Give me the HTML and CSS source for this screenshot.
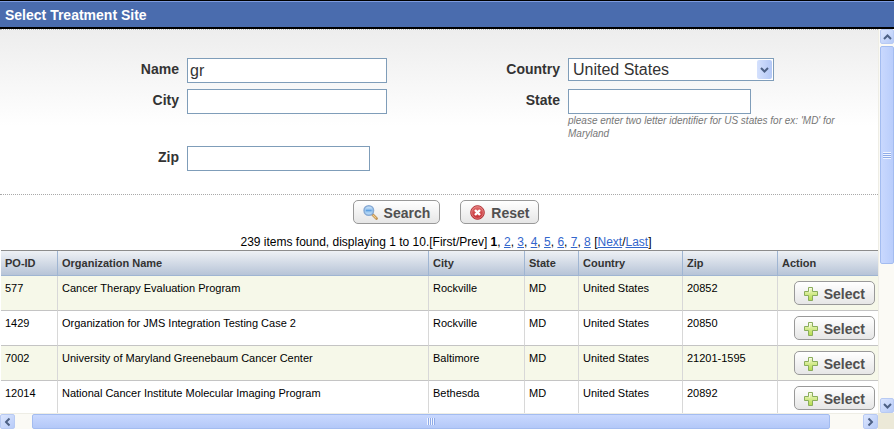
FILE: index.html
```html
<!DOCTYPE html>
<html lang="en">
<head>
<meta charset="utf-8">
<title>Select Treatment Site</title>
<link rel="stylesheet" href="styles.css">
</head>
<body>
<svg class="defs" aria-hidden="true">
  <defs>
    <linearGradient id="green" x1="0" y1="0" x2="0" y2="1"><stop offset="0" stop-color="#f4fad6"/><stop offset=".45" stop-color="#d6ec92"/><stop offset="1" stop-color="#b4dc4c"/></linearGradient>
    <linearGradient id="red" x1="0" y1="0" x2="0" y2="1"><stop offset="0" stop-color="#e07070"/><stop offset="1" stop-color="#c22a30"/></linearGradient>
    <linearGradient id="lens" x1="0" y1="0" x2="0" y2="1"><stop offset="0" stop-color="#d8ebfb"/><stop offset=".5" stop-color="#8fc0ee"/><stop offset="1" stop-color="#c4e2fa"/></linearGradient>
    <symbol id="plus" viewBox="0 0 14 14"><path d="M4.500 .5h4v4h5v4h-5v5h-4v-5h-4v-4h4z" fill="url(#green)" stroke="#8aad5c"/><path d="M5.500 5.500v-4h2" fill="none" stroke="#fff" stroke-opacity=".6"/></symbol>
    <symbol id="find" viewBox="0 0 15 15"><path d="M9.500 9.500l4 4" stroke="#b98a4a" stroke-width="2.600" stroke-linecap="round"/><path d="M9.800 9.800l3.500 3.500" stroke="#f2cf8c" stroke-width="1.200"/><circle cx="5.800" cy="5.500" r="4.800" fill="url(#lens)" stroke="#86a9d4" stroke-width="1.400"/><path d="M3 5.500h5.500" stroke="#5e9fe0" stroke-width="1.500"/></symbol>
    <symbol id="cancel" viewBox="0 0 15 15"><circle cx="7.500" cy="7.500" r="6.800" fill="url(#red)" stroke="#b02d32"/><circle cx="7.500" cy="7.500" r="5.800" fill="none" stroke="#eda0a0" stroke-width=".6"/><path d="M5 5l5 5M10 5l-5 5" stroke="#fff" stroke-width="2.400"/></symbol>
    <symbol id="chevron" viewBox="0 0 9 6"><path d="M1 1l3.500 3.500L8 1" fill="none" stroke="#4d6185" stroke-width="2"/></symbol>
  </defs>
</svg>
<header class="titlebar"><h1>Select Treatment Site</h1></header>
<div class="viewport">
  <main class="pane">
    <form class="search">
      <div class="fields">
        <label for="name">Name</label>
        <div><input id="name" type="text" value="gr"></div>
        <label for="country">Country</label>
        <div class="select">
          <select id="country"><option>United States</option></select>
          <span class="drop"><svg><use href="#chevron"/></svg></span>
        </div>
        <label for="city">City</label>
        <div><input id="city" type="text"></div>
        <label for="state">State</label>
        <div>
          <input id="state" class="short" type="text">
          <p class="note">please enter two letter identifier for US states for ex: 'MD' for Maryland</p>
        </div>
        <label for="zip">Zip</label>
        <div><input id="zip" class="short" type="text"></div>
      </div>
      <div class="actions">
        <button type="button" class="btn"><svg><use href="#find"/></svg>Search</button>
        <button type="reset" class="btn"><svg><use href="#cancel"/></svg>Reset</button>
      </div>
    </form>
    <p class="paging">239 items found, displaying 1 to 10.[First/Prev] <b>1</b>, <a href="#2">2</a>, <a href="#3">3</a>, <a href="#4">4</a>, <a href="#5">5</a>, <a href="#6">6</a>, <a href="#7">7</a>, <a href="#8">8</a> [<a href="#next">Next</a>/<a href="#last">Last</a>]</p>
    <table class="results">
      <colgroup><col class="c-id"><col><col class="c-city"><col class="c-state"><col class="c-country"><col class="c-zip"><col class="c-action"></colgroup>
      <thead><tr><th>PO-ID</th><th>Organization Name</th><th>City</th><th>State</th><th>Country</th><th>Zip</th><th>Action</th></tr></thead>
      <tbody>
        <tr><td>577</td><td>Cancer Therapy Evaluation Program</td><td>Rockville</td><td>MD</td><td>United States</td><td>20852</td><td class="act"><button type="button" class="btn"><svg><use href="#plus"/></svg>Select</button></td></tr>
        <tr><td>1429</td><td>Organization for JMS Integration Testing Case 2</td><td>Rockville</td><td>MD</td><td>United States</td><td>20850</td><td class="act"><button type="button" class="btn"><svg><use href="#plus"/></svg>Select</button></td></tr>
        <tr><td>7002</td><td>University of Maryland Greenebaum Cancer Center</td><td>Baltimore</td><td>MD</td><td>United States</td><td>21201-1595</td><td class="act"><button type="button" class="btn"><svg><use href="#plus"/></svg>Select</button></td></tr>
        <tr><td>12014</td><td>National Cancer Institute Molecular Imaging Program</td><td>Bethesda</td><td>MD</td><td>United States</td><td>20892</td><td class="act"><button type="button" class="btn"><svg><use href="#plus"/></svg>Select</button></td></tr>
      </tbody>
    </table>
  </main>
  <div class="bar vertical">
    <span class="arrow up"><svg><use href="#chevron"/></svg></span>
    <span class="track"><span class="thumb"><i class="grip"></i></span></span>
    <span class="arrow"><svg><use href="#chevron"/></svg></span>
  </div>
  <div class="bar horizontal">
    <span class="arrow left"><svg><use href="#chevron"/></svg></span>
    <span class="track"><span class="thumb"><i class="grip"></i></span></span>
    <span class="arrow right"><svg><use href="#chevron"/></svg></span>
  </div>
  <div class="corner"></div>
</div>
</body>
</html>
```
FILE: styles.css
```css
* { box-sizing: border-box; }

body {
  margin: 0;
  height: 100vh;
  padding-bottom: 3px;
  display: flex;
  flex-direction: column;
  overflow: hidden;
  background: #fff;
  color: #000;
  font-family: "Liberation Sans", Arial, sans-serif;
  font-size: 11px;
}

.defs { position: absolute; width: 0; height: 0; }

.titlebar {
  flex: none;
  padding: 2px 5px 0;
  border-top: 1px solid #000;
  border-bottom: 2px solid #000;
  background: #4a6cae;
  box-shadow: inset 0 1px #7d9be0;
}

h1 {
  margin: 0;
  color: #fff;
  font-size: 14px;
  line-height: 24px;
}

.viewport {
  flex: 1;
  min-height: 0;
  display: grid;
  grid-template: minmax(0, 1fr) 16px / minmax(0, 1fr) 16px;
}

.pane {
  overflow: hidden;
  border-top: 1px dotted #b5b5b5;
  background: linear-gradient(#ededed, #fff 96px);
}

.fields {
  display: grid;
  grid-template-columns: 179fr 200fr 165fr 310fr;
  gap: 6px 8px;
  padding: 28px 0 23px;
  border-bottom: 1px dotted #a9a9a9;
}

.fields label {
  color: #333;
  font-size: 14px;
  font-weight: bold;
  line-height: 22px;
  text-align: right;
}

input, select {
  display: block;
  width: 200px;
  height: 25px;
  margin: 0;
  padding: 2px;
  border: 1px solid #7f9db9;
  border-radius: 0;
  background: #fff;
  color: #333;
  font-family: inherit;
  font-size: 16px;
}

.short { width: 183px; }

.select { position: relative; width: 206px; height: 23px; }

select {
  width: 100%;
  height: 23px;
  padding: 0 4px;
  appearance: none;
}

.drop {
  position: absolute;
  top: 2px;
  right: 2px;
  width: 15px;
  height: 19px;
  display: grid;
  place-items: center;
  border-radius: 2px;
  background: linear-gradient(90deg, #d5e1fd, #b4c8f6);
  pointer-events: none;
}

.drop svg, .arrow svg { width: 9px; height: 6px; }

.note {
  margin: 0;
  color: #777;
  font-size: 10px;
  font-style: italic;
  line-height: 13px;
}

.actions {
  display: flex;
  justify-content: center;
  gap: 20px;
  padding: 5px 0 10px 14px;
}

.btn {
  height: 24px;
  display: inline-flex;
  align-items: center;
  gap: 6px;
  padding: 1px 9px 0;
  border: 1px solid #999;
  border-radius: 5px;
  background: linear-gradient(#fff, #e6e6e6);
  color: #505050;
  font-family: inherit;
  font-size: 14px;
  font-weight: bold;
}

.btn svg { width: 15px; height: 15px; }

.paging {
  margin: 0;
  padding-left: 14px;
  font-size: 12px;
  line-height: 16px;
  text-align: center;
}

.paging a { color: #36c; }

.results {
  width: calc(100% - 1px);
  margin-left: 1px;
  border-collapse: separate;
  border-spacing: 0;
  border-top: 1px solid #8c8c8c;
  table-layout: fixed;
}

.c-id { width: 57px; }
.c-city { width: 96px; }
.c-state { width: 54px; }
.c-country { width: 104px; }
.c-zip { width: 95px; }
.c-action { width: 100px; }

th, td {
  padding: 0 4px;
  text-align: left;
  white-space: nowrap;
}

th {
  height: 25px;
  border-right: 1px solid #9fb5d2;
  border-bottom: 1px solid #9fb5d2;
  background: linear-gradient(#eef1f5, #b7c4d7);
  color: #333;
}

td {
  height: 35px;
  padding-top: 5px;
  border-right: 1px solid #d8d8d8;
  border-bottom: 1px solid #c4c4c4;
  line-height: 14px;
  vertical-align: top;
}

th:last-child, td:last-child { border-right: 0; }

tbody tr:nth-child(odd) { background: #f6f8e9; }

.act { padding: 5px 3px 0; text-align: right; }

.act .btn { padding: 1px 9px 0; }

.act .btn svg { width: 14px; height: 14px; }

.bar { display: flex; background: #fbfaf5; }

.vertical { flex-direction: column; padding-left: 1px; border-left: 1px solid #eeede5; }
.horizontal { border-top: 1px solid #eeede5; }

.corner { background: #ece9d8; }

.arrow {
  flex: none;
  width: 15px;
  height: 15px;
  display: grid;
  place-items: center;
  border: 1px solid #b8caf3;
  border-radius: 2px;
  background: linear-gradient(135deg, #dce6fe, #b7cbf8);
}

.vertical .arrow, .vertical .thumb { width: 14px; }

.up svg { transform: rotate(180deg); }
.left svg { transform: rotate(90deg); }
.right svg { transform: rotate(-90deg); }

.track { flex: 1; display: flex; }

.vertical .track { flex-direction: column; padding-top: 2px; }
.horizontal .track { padding-left: 17px; }

.thumb {
  display: grid;
  place-items: center;
  border: 1px solid #a3bcf0;
  border-radius: 2px;
}

.vertical .thumb { height: 62%; background: linear-gradient(90deg, #c9d8fe, #b9cdfb); }
.horizontal .thumb { width: 96%; background: linear-gradient(#c9d8fe, #b3c8f8); }

.grip { width: 8px; height: 7px; }

.vertical .grip { background: repeating-linear-gradient(#f1f5ff 0 1px, #8fabe8 1px 2px); }
.horizontal .grip { background: repeating-linear-gradient(90deg, #f1f5ff 0 1px, #8fabe8 1px 2px); }
```
